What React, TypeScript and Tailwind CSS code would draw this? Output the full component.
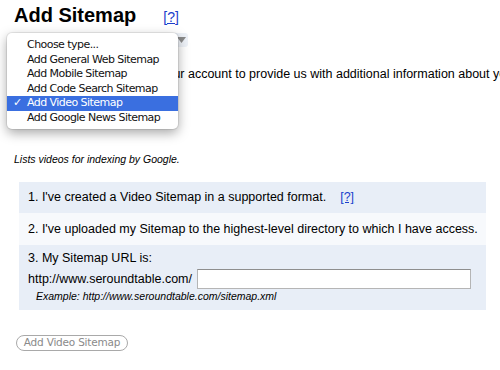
const menuItems = [
  'Choose type...',
  'Add General Web Sitemap',
  'Add Mobile Sitemap',
  'Add Code Search Sitemap',
  'Add Video Sitemap',
  'Add Google News Sitemap',
];

const selected = 'Add Video Sitemap';

function HelpLink({ className = '' }: { className?: string }) {
  return (
    <a href="#" className={`text-[#1a3fcc] underline ${className}`}>
      [?]
    </a>
  );
}

function TypeMenu() {
  return (
    <div className="absolute left-[7px] top-[33px] w-[171px] rounded-[5px] bg-white pt-[5px] pb-[4px] shadow-[0_4px_12px_rgba(0,0,0,0.35),0_0_0_1px_rgba(0,0,0,0.08)] font-['DejaVu_Sans',sans-serif] text-[11px] tracking-[-0.05em] text-[#111]">
      {menuItems.map((item) => {
        const isSel = item === selected;
        return (
          <div
            key={item}
            className={
              isSel
                ? 'flex h-[14.5px] items-center bg-[#3a6fe0] text-white'
                : 'flex h-[14.5px] items-center'
            }
          >
            <span className="w-[20px] pl-[6px] text-[11px]">{isSel ? '✓' : ''}</span>
            <span>{item}</span>
          </div>
        );
      })}
    </div>
  );
}

export default function App() {
  return (
    <div className="relative h-[370px] w-[500px] overflow-hidden bg-white font-['Liberation_Sans',Arial,sans-serif] text-[12.5px] text-black">
      <div className="px-[14px] pt-[3px]">
        <div className="flex items-baseline">
          <h1 className="text-[20px] font-bold leading-[24px]">Add Sitemap</h1>
          <HelpLink className="ml-[27px] text-[14px]" />
        </div>

        <div className="mt-[5px] flex h-[14px] w-[174px] items-center justify-end rounded-[3px] bg-[#eef2f8] pr-[2px]">
          <svg width="9" height="6" viewBox="0 0 9 6">
            <path d="M0 0 L9 0 L4.5 6 Z" fill="#8a8a8a" />
          </svg>
        </div>

        <p className="mt-[19px] whitespace-nowrap leading-[16px]">
          You can add a Sitemap to your account to provide us with additional information about your site.
        </p>

        <p className="mt-[70px] text-[10.5px] italic leading-[14px]">Lists videos for indexing by Google.</p>
      </div>

      <div className="ml-[19px] mt-[16px] w-[467px]">
        <div className="flex h-[31px] items-center bg-[#e8eef7] pl-[9px]">
          <span>1. I've created a Video Sitemap in a supported format.</span>
          <HelpLink className="ml-[14px]" />
        </div>
        <div className="flex h-[32px] items-center bg-[#f7f9fc] pl-[9px]">
          2. I've uploaded my Sitemap to the highest-level directory to which I have access.
        </div>
        <div className="bg-[#e8eef7] pl-[9px] pt-[5px] pb-[7px]">
          <div className="leading-[16px]">3. My Sitemap URL is:</div>
          <div className="mt-[3px] flex h-[20px] items-center">
            <span>http://www.seroundtable.com/</span>
            <div className="ml-[5px] h-[20px] w-[274px] border border-[#b5b5b5] border-t-[#8e8e8e] bg-white" />
          </div>
          <div className="pl-[8px] text-[10.5px] italic leading-[14px]">
            Example: http://www.seroundtable.com/sitemap.xml
          </div>
        </div>
      </div>

      <div className="ml-[16px] mt-[25px]">
        <button className="flex h-[16px] w-[112px] items-center justify-center rounded-full border border-[#a9a9a9] bg-white font-['DejaVu_Sans',sans-serif] text-[10.5px] tracking-[-0.02em] text-[#8a8a8a]">
          Add Video Sitemap
        </button>
      </div>

      <TypeMenu />
    </div>
  );
}
